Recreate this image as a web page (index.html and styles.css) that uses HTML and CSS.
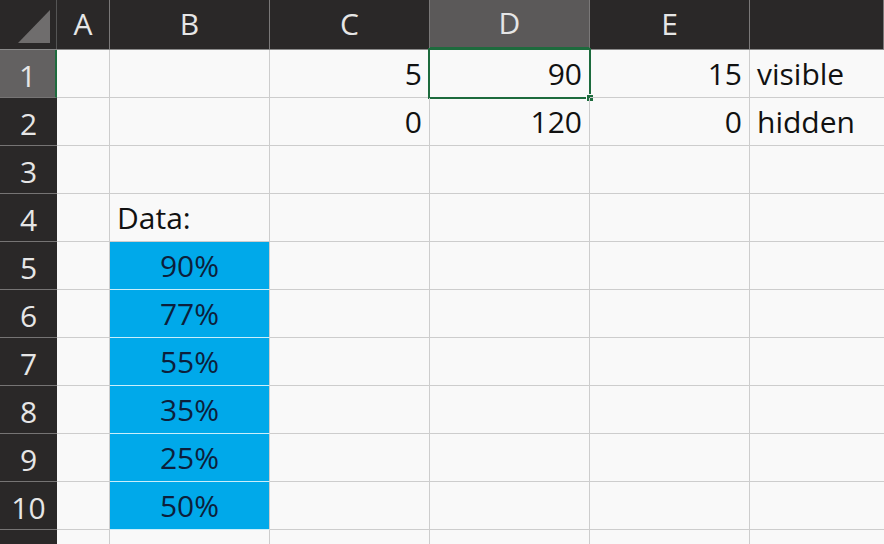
FILE: index.html
```html
<!DOCTYPE html>
<html>
<head>
<meta charset="utf-8">
<link rel="stylesheet" href="styles.css">
</head>
<body>
<div class="sheet">
  <div class="row head">
    <div class="corner"><svg width="57" height="49" viewBox="0 0 57 49"><polygon points="18,43 50,43 50,10" fill="#6f6d6d"/></svg></div>
    <div class="ch a">A</div>
    <div class="ch w">B</div>
    <div class="ch w">C</div>
    <div class="ch w sel">D</div>
    <div class="ch w">E</div>
    <div class="ch f"></div>
  </div>
  <div class="row">
    <div class="rh sel">1</div>
    <div class="c a"></div>
    <div class="c w"></div>
    <div class="c w num">5</div>
    <div class="c w num active">90<span class="selbox"><span class="handle"></span></span></div>
    <div class="c w num">15</div>
    <div class="c f">visible</div>
  </div>
  <div class="row">
    <div class="rh">2</div>
    <div class="c a"></div>
    <div class="c w"></div>
    <div class="c w num">0</div>
    <div class="c w num">120</div>
    <div class="c w num">0</div>
    <div class="c f">hidden</div>
  </div>
  <div class="row">
    <div class="rh">3</div>
    <div class="c a"></div><div class="c w"></div><div class="c w"></div><div class="c w"></div><div class="c w"></div><div class="c f"></div>
  </div>
  <div class="row">
    <div class="rh">4</div>
    <div class="c a"></div><div class="c w">Data:</div><div class="c w"></div><div class="c w"></div><div class="c w"></div><div class="c f"></div>
  </div>
  <div class="row">
    <div class="rh">5</div>
    <div class="c a"></div><div class="c w blue">90%</div><div class="c w"></div><div class="c w"></div><div class="c w"></div><div class="c f"></div>
  </div>
  <div class="row">
    <div class="rh">6</div>
    <div class="c a"></div><div class="c w blue">77%</div><div class="c w"></div><div class="c w"></div><div class="c w"></div><div class="c f"></div>
  </div>
  <div class="row">
    <div class="rh">7</div>
    <div class="c a"></div><div class="c w blue">55%</div><div class="c w"></div><div class="c w"></div><div class="c w"></div><div class="c f"></div>
  </div>
  <div class="row">
    <div class="rh">8</div>
    <div class="c a"></div><div class="c w blue">35%</div><div class="c w"></div><div class="c w"></div><div class="c w"></div><div class="c f"></div>
  </div>
  <div class="row">
    <div class="rh">9</div>
    <div class="c a"></div><div class="c w blue">25%</div><div class="c w"></div><div class="c w"></div><div class="c w"></div><div class="c f"></div>
  </div>
  <div class="row">
    <div class="rh">10</div>
    <div class="c a"></div><div class="c w blue">50%</div><div class="c w"></div><div class="c w"></div><div class="c w"></div><div class="c f"></div>
  </div>
  <div class="row">
    <div class="rh">11</div>
    <div class="c a"></div><div class="c w"></div><div class="c w"></div><div class="c w"></div><div class="c w"></div><div class="c f"></div>
  </div>
</div>
</body>
</html>
```
FILE: styles.css
```css
html, body {
  margin: 0;
  padding: 0;
  background: #f9f9f9;
  overflow: hidden;
}
.sheet {
  width: 884px;
  height: 544px;
  overflow: hidden;
  font-family: "Open Sans", "Noto Sans", sans-serif;
  font-size: 30px;
  color: #111;
}
.row {
  display: flex;
  height: 48px;
}
.row.head {
  height: 50px;
  background: #2a2828;
  border-bottom: 1px solid #8a8a8a;
  box-sizing: border-box;
}
.corner {
  width: 57px;
  flex: none;
  border-right: 1px solid #555;
  box-sizing: border-box;
}
.corner svg { display: block; }
.ch {
  box-sizing: border-box;
  flex: none;
  height: 49px;
  border-right: 1px solid #7a7878;
  color: #e6e6e6;
  font-size: 30px;
  display: flex;
  justify-content: center;
  align-items: center;
  padding-bottom: 2px;
}
.ch.sel {
  background: #5b5959;
  border-bottom: 2px solid #1d6b3d;
  height: 49px;
}
.a { width: 53px; flex: none; }
.w { width: 160px; flex: none; }
.f { flex: 1; }
.rh {
  width: 57px;
  flex: none;
  box-sizing: border-box;
  background: #2a2828;
  border-bottom: 1px solid #767474;
  color: #e6e6e6;
  font-size: 30px;
  display: flex;
  justify-content: center;
  align-items: center;
  padding-top: 4px;
}
.rh.sel {
  background: #636161;
  border-right: 2px solid #1d6b3d;
}
.c {
  box-sizing: border-box;
  border-right: 1px solid #cdcdcd;
  border-bottom: 1px solid #cdcdcd;
  display: flex;
  align-items: flex-end;
  padding: 0 6px 4px 7px;
  line-height: 38px;
  white-space: nowrap;
  position: relative;
}
.c.f { border-right: none; }
.num { justify-content: flex-end; padding-right: 7px; }
.blue {
  background: #00a9ea;
  border-bottom-color: #c9eefb;
  justify-content: center;
  color: #0c1f3c;
  padding-left: 0;
  padding-right: 0;
}
.selbox {
  position: absolute;
  left: -2px;
  top: -2px;
  right: -2px;
  bottom: -2px;
  border: 2px solid #1d6b3d;
  pointer-events: none;
}
.handle {
  position: absolute;
  right: -5px;
  bottom: -5px;
  width: 6px;
  height: 6px;
  background: #1d6b3d;
  border: 1px solid #f9f9f9;
}
```
